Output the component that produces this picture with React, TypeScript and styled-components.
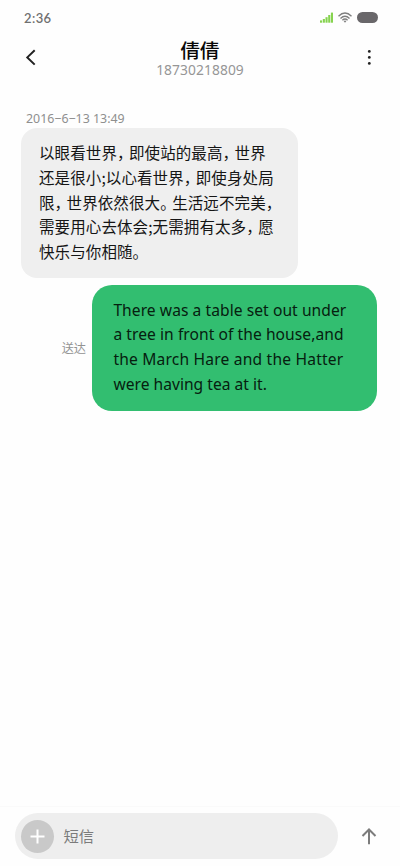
import React from 'react';
import styled, { createGlobalStyle } from 'styled-components';

const latin = '"Noto Sans", "Noto Sans CJK SC", sans-serif';
const chinese = '"Noto Sans CJK SC", sans-serif';

const GlobalStyle = createGlobalStyle`
  * { box-sizing: border-box; }
  body { margin: 0; background: #fefefe; }
`;

const Screen = styled.main`
  width: 400px;
  height: 866px;
  display: flex;
  flex-direction: column;
  background: #fefefe;
  font-family: ${latin};
  overflow: hidden;
`;

const StatusBar = styled.div`
  height: 34px;
  flex: none;
  display: flex;
  align-items: center;
  justify-content: space-between;
  padding: 0 22px 0 24px;
`;

const Clock = styled.span`
  font-family: Lato, ${latin};
  font-size: 13px;
  font-weight: 600;
  line-height: 16px;
  letter-spacing: 0.4px;
  color: #707070;
  padding-top: 1px;
`;

const StatusIcons = styled.div`
  display: flex;
  align-items: center;
  gap: 4px;
`;

const Battery = styled.span`
  width: 21px;
  height: 11px;
  margin-left: 1px;
  border-radius: 5.5px;
  background: #69676a;
`;

const Header = styled.header`
  height: 74px;
  flex: none;
  display: grid;
  grid-template-columns: 80px 1fr 80px;
  align-items: start;
`;

const IconButton = styled.button<{ $left: number; $top: number }>`
  border: 0;
  padding: 0;
  margin: ${(p) => p.$top}px 0 0 ${(p) => p.$left}px;
  width: 20px;
  height: 20px;
  background: none;
  svg { display: block; }
`;

const Contact = styled.div`
  display: flex;
  flex-direction: column;
  align-items: center;
  padding-top: 3px;
`;

const ContactName = styled.h1`
  margin: 0;
  font-family: ${chinese};
  font-size: 19.5px;
  line-height: 25px;
  font-weight: 500;
  color: #080808;
`;

const ContactNumber = styled.span`
  font-size: 13.8px;
  line-height: 15px;
  letter-spacing: 0.08px;
  color: #969696;
`;

const Thread = styled.section`
  flex: 1;
  display: flex;
  flex-direction: column;
  padding: 0 23px 0 21px;
`;

const Timestamp = styled.time`
  height: 20px;
  padding-left: 5px;
  font-size: 12.4px;
  line-height: 21px;
  color: #8f8f8f;
  white-space: nowrap;
`;

const IncomingBubble = styled.div`
  width: 277px;
  height: 150px;
  padding: 12px 0 0 18px;
  border-radius: 16px;
  background: #efefef;
`;

const OutgoingRow = styled.div`
  display: flex;
  justify-content: flex-end;
  align-items: center;
  gap: 6px;
  margin-top: 7px;
`;

const Delivered = styled.span`
  font-family: ${chinese};
  font-size: 12.2px;
  line-height: 18px;
  color: #929292;
`;

const OutgoingBubble = styled.div`
  width: 285px;
  height: 126px;
  padding: 12.5px 0 0 21.4px;
  border-radius: 20px;
  background: #32be70;
`;

const Line = styled.div<{ $spacing?: number; $chinese?: boolean }>`
  height: 24.75px;
  line-height: 24.75px;
  font-family: ${(p) => (p.$chinese ? chinese : latin)};
  font-size: ${(p) => (p.$chinese ? 15.5 : 15.6)}px;
  letter-spacing: ${(p) => p.$spacing ?? 0}px;
  color: ${(p) => (p.$chinese ? '#151515' : '#06200f')};
  white-space: nowrap;
`;

const Punctuation = styled.span`
  margin-right: 4.1px;
  font-feature-settings: "halt";
`;

const Composer = styled.footer`
  height: 60px;
  flex: none;
  display: flex;
  align-items: flex-start;
  padding: 6px 0 0 15px;
  border-top: 1px solid #fafafa;
`;

const Field = styled.div`
  width: 323px;
  height: 46px;
  display: flex;
  align-items: center;
  padding-left: 6px;
  gap: 9.5px;
  border-radius: 23px;
  background: #eeeeee;
`;

const AddButton = styled.button`
  width: 33px;
  height: 33px;
  padding: 0;
  border: 0;
  border-radius: 50%;
  display: grid;
  place-items: center;
  background: #c9c9c9;
`;

const Placeholder = styled.span`
  font-family: ${chinese};
  font-size: 15.3px;
  line-height: 24px;
  padding-bottom: 2px;
  color: #7b7b7b;
`;

const incoming = [
  '以眼看世界，即使站的最高，世界',
  '还是很小;以心看世界，即使身处局',
  '限，世界依然很大。生活远不完美，',
  '需要用心去体会;无需拥有太多，愿',
  '快乐与你相随。',
];

const outgoing = [
  { text: 'There was a table set out under', spacing: 0.06 },
  { text: 'a tree in front of the house,and', spacing: 0.06 },
  { text: 'the March Hare and the Hatter', spacing: 0.19 },
  { text: 'were having tea at it.', spacing: 0.02 },
];

function ChineseLine({ text }: { text: string }) {
  return (
    <Line $chinese $spacing={0.1}>
      {text.split(/([，。])/).map((part, i) =>
        /[，。]/.test(part) ? <Punctuation key={i}>{part}</Punctuation> : part,
      )}
    </Line>
  );
}

export default function App() {
  return (
    <>
      <GlobalStyle />
      <Screen>
        <StatusBar>
          <Clock>2:36</Clock>
          <StatusIcons>
            <svg width="14" height="11" viewBox="0 0 14 11" fill="#86d34f">
              <rect x="0" y="8.4" width="2.1" height="2.3" />
              <rect x="2.8" y="7" width="2.1" height="3.7" />
              <rect x="5.5" y="5.2" width="2.1" height="5.5" />
              <rect x="8.2" y="3" width="2.1" height="7.7" />
              <rect x="10.9" y="0.6" width="2.1" height="10.1" />
            </svg>
            <svg width="14" height="11" viewBox="0 0 14 11" fill="none" stroke="#7e7e7e" strokeWidth="1.4">
              <path d="M0.5 4.2 Q7 -2 13.5 4.2" />
              <path d="M2.5 6.4 Q7 2.1 11.5 6.4" />
              <path d="M4.4 8.3 Q7 5.9 9.6 8.3" />
              <path d="M5.6 9 L7 10.7 L8.4 9 Q7 8 5.6 9Z" fill="#7e7e7e" stroke="none" />
            </svg>
            <Battery />
          </StatusIcons>
        </StatusBar>
        <Header>
          <IconButton $left={21} $top={13} aria-label="Back">
            <svg width="20" height="20" fill="none" stroke="#222" strokeWidth="2">
              <path d="M13.7 3.2 L6.3 10.4 L13.7 17.6" />
            </svg>
          </IconButton>
          <Contact>
            <ContactName>倩倩</ContactName>
            <ContactNumber>18730218809</ContactNumber>
          </Contact>
          <IconButton $left={39} $top={13} aria-label="More">
            <svg width="20" height="20" fill="#222">
              <circle cx="10.3" cy="4.4" r="1.4" />
              <circle cx="10.3" cy="10.4" r="1.4" />
              <circle cx="10.3" cy="16.4" r="1.4" />
            </svg>
          </IconButton>
        </Header>
        <Thread>
          <Timestamp>2016−6−13 13:49</Timestamp>
          <IncomingBubble>
            {incoming.map((text) => (
              <ChineseLine key={text} text={text} />
            ))}
          </IncomingBubble>
          <OutgoingRow>
            <Delivered>送达</Delivered>
            <OutgoingBubble>
              {outgoing.map((line) => (
                <Line key={line.text} $spacing={line.spacing}>{line.text}</Line>
              ))}
            </OutgoingBubble>
          </OutgoingRow>
        </Thread>
        <Composer>
          <Field>
            <AddButton aria-label="Add">
              <svg width="15" height="15" fill="none" stroke="#fff" strokeWidth="2">
                <path d="M7.5 0.5 V14.5 M0.5 7.5 H14.5" />
              </svg>
            </AddButton>
            <Placeholder>短信</Placeholder>
          </Field>
          <IconButton $left={21} $top={13} aria-label="Send">
            <svg width="20" height="20" fill="none" stroke="#7c7c7c" strokeWidth="2">
              <path d="M10 18.3 V3.5 M3.5 10 L10 3.5 L16.5 10" />
            </svg>
          </IconButton>
        </Composer>
      </Screen>
    </>
  );
}
